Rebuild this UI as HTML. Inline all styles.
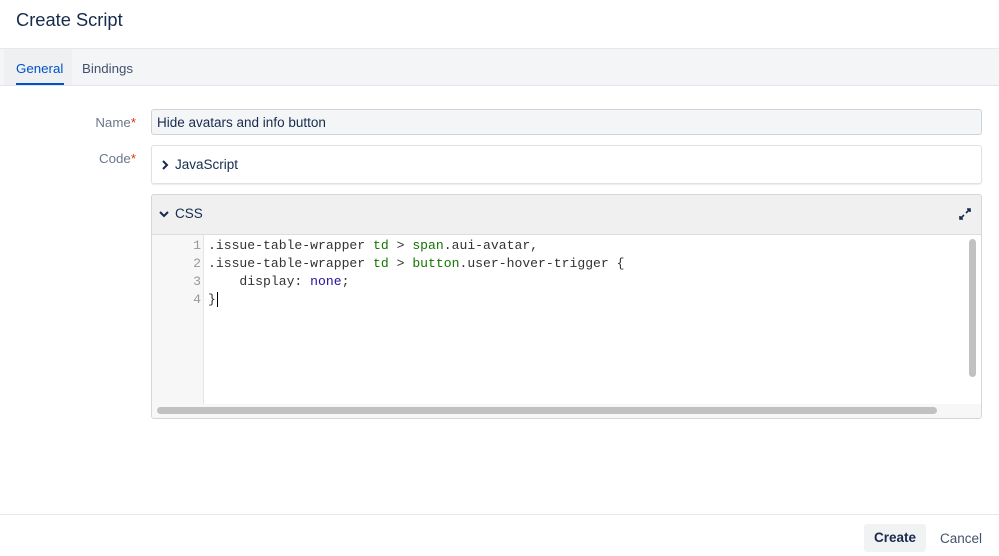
<!DOCTYPE html>
<html><head><meta charset="utf-8"><style>
*{box-sizing:border-box;margin:0;padding:0}
body{width:999px;height:556px;background:#fff;font-family:"Liberation Sans",sans-serif;position:relative;overflow:hidden;color:#172b4d}
.abs{position:absolute}
h1{position:absolute;left:16px;top:9px;font-size:18.3px;font-weight:normal;color:#172b4d}
.tabs{left:0;top:48px;width:999px;height:38px;background:#f4f5f7;border-top:1px solid #e6e8eb;border-bottom:1px solid #e3e5e8}
.tab{position:absolute;top:12px;font-size:13.3px}
.lbl{font-size:13.3px;color:#6b778c;text-align:right;width:136px;left:0}
.lbl span{color:#de350b}
.box{border:1px solid #dfe1e6;border-radius:3px}
.mono{font-family:"Liberation Mono",monospace;font-size:13.1px;line-height:18px;white-space:pre}
</style></head><body>
<h1>Create Script</h1>
<div class="abs tabs">
 <div class="abs" style="left:4px;top:0;width:68px;height:36px;background:#eef0f2"></div>
 <div class="tab" style="left:16px;color:#0052cc">General</div>
 <div class="tab" style="left:82px;color:#42526e">Bindings</div>
 <div class="abs" style="left:16px;top:34px;width:48px;height:2px;background:#0052cc"></div>
</div>
<div class="abs lbl" style="top:115px">Name<span>*</span></div>
<div class="abs box" style="left:151px;top:109px;width:831px;height:26px;background:#f4f5f7;border:1px solid #cfd2d8;font-size:13.5px;padding:5px 5px">Hide avatars and info button</div>
<div class="abs lbl" style="top:151px">Code<span>*</span></div>
<div class="abs box" style="left:151px;top:145px;width:831px;height:39px;box-shadow:0 1px 1px rgba(0,0,0,.08)">
 <svg class="abs" style="left:9px;top:14px" width="8" height="10" viewBox="0 0 8 10" fill="none" stroke="#172b4d" stroke-width="2"><path d="M2 1l4 4-4 4"/></svg>
 <div class="abs" style="left:23px;top:11px;font-size:13.5px">JavaScript</div>
</div>
<div class="abs box" style="left:151px;top:194px;width:831px;height:225px;background:#f0f0f0;border-color:#d6d6d6;overflow:hidden">
 <svg class="abs" style="left:7px;top:15px" width="10" height="8" viewBox="0 0 10 8" fill="none" stroke="#172b4d" stroke-width="2"><path d="M1 2l4 4 4-4"/></svg>
 <div class="abs" style="left:23px;top:11px;font-size:13.5px">CSS</div>
 <svg class="abs" style="left:806px;top:12px" width="14" height="14" viewBox="0 0 14 14" fill="none" stroke="#172b4d" stroke-width="1.6"><path d="M8 6l4-4M9 2h3v3M6 8l-4 4M2 9v3h3"/></svg>
 <div class="abs" style="left:0;top:39px;width:829px;height:170px;background:#fff;border-top:1px solid #ddd">
  <div class="abs" style="left:0;top:0;width:52px;height:170px;background:#f7f7f7;border-right:1px solid #e5e5e5"></div>
  <div class="abs mono" style="left:0;top:2px;width:49px;text-align:right;color:#999">1
2
3
4</div>
  <div class="abs mono" style="left:56px;top:2px;color:#333">.issue-table-wrapper <span style="color:#170">td</span> &gt; <span style="color:#170">span</span>.aui-avatar,
.issue-table-wrapper <span style="color:#170">td</span> &gt; <span style="color:#170">button</span>.user-hover-trigger {
    display: <span style="color:#219">none</span>;
}<span style="border-left:1px solid #000;margin-left:1px"></span></div>
  <div class="abs" style="left:817px;top:4px;width:7px;height:138px;background:#c1c1c1;border-radius:4px"></div>
 </div>
 <div class="abs" style="left:0;top:209px;width:829px;height:15px;background:#f7f7f7"></div>
 <div class="abs" style="left:5px;top:212px;width:780px;height:7px;background:#c1c1c1;border-radius:4px"></div>
</div>
<div class="abs" style="left:0;top:514px;width:999px;height:1px;background:#e6e8eb"></div>
<div class="abs" style="left:864px;top:524px;width:62px;height:28px;background:#f1f2f4;border-radius:3px;font-size:13.5px;font-weight:bold;text-align:center;line-height:28px">Create</div>
<div class="abs" style="left:940px;top:531px;font-size:13.5px;color:#42526e">Cancel</div>
</body></html>
